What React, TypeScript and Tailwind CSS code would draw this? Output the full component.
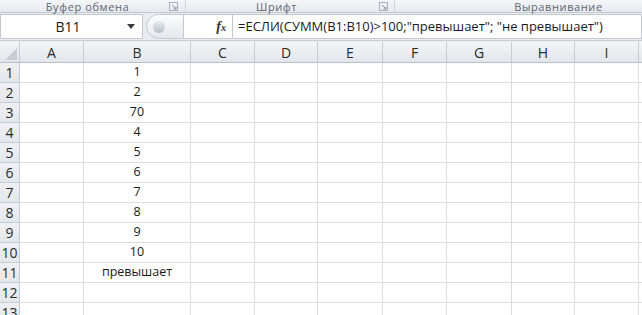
import React from 'react';

const cols = ['A', 'B', 'C', 'D', 'E', 'F', 'G', 'H', 'I'];
const colW = ['w-[64px]', 'w-[107px]', 'w-[64px]', 'w-[63px]', 'w-[65px]', 'w-[64px]', 'w-[65px]', 'w-[63px]', 'w-[64px]'];
const values: Record<number, string> = {
  1: '1', 2: '2', 3: '70', 4: '4', 5: '5', 6: '6', 7: '7', 8: '8', 9: '9', 10: '10', 11: 'превышает',
};

const Launcher = () => (
  <svg width="9" height="9" viewBox="0 0 9 9" className="shrink-0">
    <rect x="0.5" y="0.5" width="8" height="8" fill="none" stroke="#a9b0ba" />
    <path d="M3 3 L7 7 M7 4.5 V7 H4.5" stroke="#8d949e" fill="none" />
  </svg>
);

export default function App() {
  const font = { fontFamily: '"Open Sans", "Noto Sans", sans-serif' };
  return (
    <div className="w-[642px] h-[315px] overflow-hidden bg-white text-[#1a1a1a]" style={font}>
      {/* ribbon group labels */}
      <div className="h-[13px] flex bg-gradient-to-b from-[#f4f6f9] to-[#e6e9ee] border-b border-[#c3c8d0] text-[11px] leading-none tracking-[0.6px] text-[#5f6670]">
        <div className="w-[186px] flex items-center border-r border-[#d2d6dc]">
          <span className="flex-1 text-center pl-[6px]">Буфер обмена</span>
          <span className="pr-[7px]"><Launcher /></span>
        </div>
        <div className="w-[209px] flex items-center border-r border-[#d2d6dc]">
          <span className="flex-1 text-center pr-[12px]">Шрифт</span>
          <span className="pr-[6px]"><Launcher /></span>
        </div>
        <div className="flex-1 flex items-center">
          <span className="flex-1 text-center pl-[80px]">Выравнивание</span>
        </div>
      </div>

      {/* formula bar */}
      <div className="h-[28px] flex items-center bg-[#e9ecf0] border-b border-[#c9ced5]">
        <div className="w-[143px] h-[25px] bg-white border border-[#c4c9d0] flex items-center">
          <span className="flex-1 text-center text-[14px] pl-[8px]">B11</span>
          <svg width="8" height="5" viewBox="0 0 8 5" className="mr-[7px]">
            <path d="M0 0 H8 L4 5 Z" fill="#3c3c3c" />
          </svg>
        </div>
        <div className="ml-[3px] h-[25px] w-[38px] rounded-l-full border border-[#c4c9d0] bg-gradient-to-b from-[#fdfdfe] to-[#e4e7eb] flex items-center pl-[6px]">
          <div className="w-[12px] h-[12px] rounded-full bg-gradient-to-b from-[#e8eaed] to-[#b9bec5]" />
        </div>
        <div className="w-[48px] h-[25px] bg-white border-y border-[#c4c9d0] flex items-center justify-end pr-[6px]">
          <span className="text-[14px] italic font-bold text-[#333]" style={{ fontFamily: '"Liberation Serif", serif' }}>
            f<span className="text-[10px]">x</span>
          </span>
        </div>
        <div className="flex-1 h-[25px] bg-white border border-[#c4c9d0] flex items-center pl-[5px] text-[13px] whitespace-nowrap overflow-hidden">
          =ЕСЛИ(СУММ(B1:B10)&gt;100;"превышает"; "не превышает")
        </div>
      </div>

      {/* grid */}
      <div className="pt-[1px] bg-[#e9ecf0]">
        <div className="flex h-[21px] bg-gradient-to-b from-[#f3f5f7] to-[#e2e6ea] border-b border-[#b8bfc8] text-[14px] text-[#2b2b2b]">
          <div className="w-[20px] shrink-0 border-r border-[#c6ccd3] relative">
            <svg width="12" height="12" viewBox="0 0 12 12" className="absolute right-[2px] bottom-[2px]">
              <path d="M12 0 V12 H0 Z" fill="#c9ced5" />
            </svg>
          </div>
          {cols.map((c, i) => (
            <div key={c} className={`${colW[i]} shrink-0 border-r border-[#c6ccd3] flex items-center justify-center`}>
              {c}
            </div>
          ))}
          <div className="flex-1" />
        </div>
        {Array.from({ length: 13 }, (_, r) => r + 1).map((r) => (
          <div key={r} className="flex h-[20px] bg-white">
            <div className="w-[20px] shrink-0 bg-gradient-to-b from-[#eef0f3] to-[#e4e7eb] border-r border-b border-[#c6ccd3] flex items-center justify-center text-[14px] text-[#2b2b2b]">
              {r}
            </div>
            {cols.map((c, i) => (
              <div key={c} className={`${colW[i]} shrink-0 border-r border-b border-[#dadcdd] flex items-center justify-center text-[12.5px]`}>
                {c === 'B' ? values[r] ?? '' : ''}
              </div>
            ))}
            <div className="flex-1 border-b border-[#dadcdd]" />
          </div>
        ))}
      </div>
    </div>
  );
}
